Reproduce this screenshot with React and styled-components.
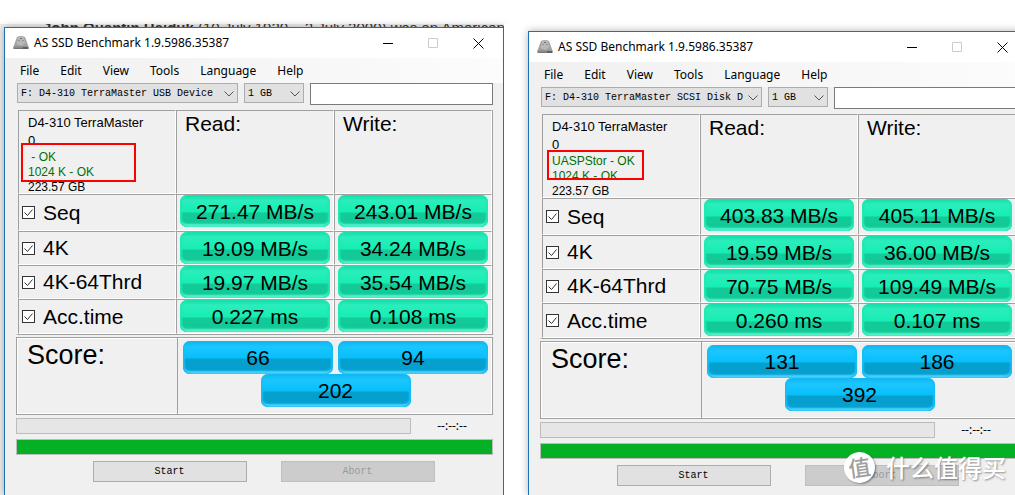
import React from 'react';
import styled, { createGlobalStyle } from 'styled-components';

const GlobalStyle = createGlobalStyle`
  * {
    box-sizing: border-box;
  }

  body {
    margin: 0;
    background: #ffffff;
    color: #000000;
    font-family: "Liberation Sans", Arial, sans-serif;
    overflow: hidden;
  }
`;

const uiFont = '"Noto Sans", "Open Sans", sans-serif';
const monoFont = '"Liberation Mono", "Courier New", monospace';

const Desktop = styled.main`
  position: relative;
  display: flex;
  height: 100vh;
  padding-top: 24px;
  overflow: hidden;
`;

const Pane = styled.section`
  position: relative;
  display: flex;
  flex: 1 0 ${props => props.$basis}px;
  padding: ${props => props.$inset};
  background: ${props => props.$backdrop};
`;

const Backdrop = styled.p`
  position: absolute;
  top: 0;
  left: 43px;
  height: 3px;
  margin: 0;
  overflow: hidden;
  color: #3c3430;
  font-size: 15px;
  line-height: 8px;
  white-space: nowrap;
`;

const AppWindow = styled.div`
  position: relative;
  flex: 1;
  border: 1px solid #1a70b4;
  border-bottom: none;
  background: #f0f0f0;
  box-shadow: 0 0 8px rgba(0, 0, 0, 0.3);
`;

const TitleBar = styled.header`
  display: flex;
  align-items: center;
  height: 30px;
  padding: 0 2px 0 8px;
  background: #ffffff;
  font-family: ${uiFont};
`;

const Title = styled.h1`
  flex: 1;
  margin: 0 0 0 5px;
  font-size: 12px;
  font-weight: 400;
  line-height: 20px;
  white-space: nowrap;
`;

const CaptionButton = styled.button`
  display: flex;
  align-items: center;
  justify-content: center;
  width: 45px;
  height: 28px;
  padding: 0;
  border: none;
  background: transparent;
  color: ${props => (props.disabled ? '#cccccc' : '#000000')};
`;

const MenuBar = styled.nav`
  display: flex;
  align-items: center;
  gap: 21px;
  height: 25px;
  padding-left: 15px;
  background: linear-gradient(90deg, #f0f0f0 0%, #fcfcfc 100%);
`;

const MenuItem = styled.button`
  padding: 0;
  border: none;
  background: transparent;
  color: #000000;
  font-family: ${uiFont};
  font-size: 12px;
  line-height: 20px;
`;

const Body = styled.div`
  padding: 0 10px 0 11px;
`;

const Toolbar = styled.div`
  display: flex;
  align-items: flex-start;
  margin-bottom: 5px;
  padding-left: 1px;
  gap: 6px;
`;

const SelectBox = styled.div`
  position: relative;
  flex: 0 0 ${props => props.$width}px;
`;

const Select = styled.select`
  display: block;
  width: 100%;
  height: 20px;
  padding: 0 18px 0 3px;
  border: 1px solid #adadad;
  border-radius: 0;
  background: #e1e1e1;
  color: #000000;
  font-family: ${monoFont};
  font-size: 10px;
  appearance: none;
`;

const Chevron = styled.svg`
  position: absolute;
  top: 8px;
  right: 4px;
  pointer-events: none;
`;

const TextBox = styled.input`
  flex: 1;
  min-width: 0;
  height: 22px;
  border: 1px solid #7a7a7a;
  background: #ffffff;
`;

const Results = styled.table`
  width: 100%;
  border-collapse: separate;
  border-spacing: 0;
  table-layout: fixed;
  border: solid;
  border-width: 0 1px 1px 2px;
  border-color: #f0f0f0 #a0a0a0 #a0a0a0 #f0f0f0;
`;

const Row = styled.tr`
  height: ${props => props.$height}px;
`;

const Cell = styled.td`
  padding: 0 3px;
  border: 1px solid;
  border-color: #a0a0a0 #ffffff #ffffff #a0a0a0;
  vertical-align: ${props => (props.$top ? 'top' : 'middle')};
`;

const Heading = styled.h2`
  margin: 0;
  padding: ${props => (props.$large ? '2px 10px' : '1px 5px')};
  font-size: ${props => (props.$large ? 27 : 21)}px;
  font-weight: 400;
  line-height: ${props => (props.$large ? 30 : 24)}px;
`;

const Info = styled.div`
  position: relative;
  height: 82px;
  padding: 3px 0 0 6px;
  font-size: 12px;
  line-height: 15px;
  white-space: pre;
`;

const Device = styled.div`
  font-size: 13px;
  line-height: 18px;
`;

const Status = styled.div`
  color: ${props => (props.$ok ? '#007000' : '#000000')};
`;

const Highlight = styled.div`
  position: absolute;
  top: ${props => props.$box.top}px;
  left: ${props => props.$box.left}px;
  width: ${props => props.$box.width}px;
  height: ${props => props.$box.height}px;
  border: 2px solid #ff0000;
`;

const TestLabel = styled.label`
  display: flex;
  align-items: center;
  gap: 8px;
  font-size: 21px;
  line-height: 24px;
`;

const CheckBox = styled.input`
  appearance: none;
  flex: none;
  width: 13px;
  height: 13px;
  margin: 0;
  border: 1px solid #333333;
  background: #ffffff
    url("data:image/svg+xml,%3Csvg xmlns='http://www.w3.org/2000/svg' width='11' height='11' fill='none' stroke='%23333'%3E%3Cpath d='M1.5 5.5l3 3 5-6'/%3E%3C/svg%3E")
    center no-repeat;
`;

const palettes = {
  green: {
    face: 'linear-gradient(180deg, #0fdda6 0, #2cedbc 5px, #16eeb3 17px, #12cb98 18px, #10c996 100%)',
    edge: '#20e8b2',
    glow: '#5cf5cd'
  },
  blue: {
    face: 'linear-gradient(180deg, #10b4ee 0, #1cc6ff 6px, #06bffa 17px, #069fce 18px, #04a0d0 100%)',
    edge: '#16bdf5',
    glow: '#4fd4ff'
  }
};

const Badge = styled.div`
  height: ${props => (props.$tone === 'green' ? 32 : 33)}px;
  border-radius: 7px;
  background: ${props => palettes[props.$tone].face};
  box-shadow:
    inset 2px 0 2px ${props => palettes[props.$tone].edge},
    inset -2px 0 2px ${props => palettes[props.$tone].edge},
    inset 0 -3px 2px ${props => palettes[props.$tone].glow};
  font-size: 21px;
  line-height: 34px;
  text-align: center;
`;

const ScorePanel = styled.section`
  display: grid;
  grid-template-columns: 160px 1fr;
  height: 78px;
  margin-top: 2px;
  border: 1px solid #a0a0a0;
  box-shadow: inset 1px 1px #ffffff, inset -1px -1px #ffffff;
`;

const Scores = styled.div`
  display: grid;
  grid-template-columns: repeat(4, 1fr);
  align-content: start;
  gap: 0 5px;
  padding: 3px 4px 0 5px;
  border-left: 1px solid #a0a0a0;
`;

const ScoreSlot = styled.div`
  grid-column: ${props => props.$column};
`;

const ProgressRow = styled.div`
  display: flex;
  align-items: center;
  margin-top: ${props => (props.$spaced ? 5 : 3)}px;
`;

const Track = styled.div`
  flex: 1;
  height: 16px;
  border: 1px solid #bcbcbc;
  background: ${props => (props.$done ? '#06b025' : '#e6e6e6')};
`;

const Elapsed = styled.time`
  width: 82px;
  font-family: ${uiFont};
  font-size: 12px;
  line-height: 16px;
  text-align: center;
`;

const Actions = styled.div`
  display: grid;
  grid-template-columns: 154px 154px;
  justify-content: center;
  gap: 34px;
  margin-top: 6px;
  padding-left: 18px;
`;

const ActionButton = styled.button`
  height: 21px;
  padding: 0;
  border: 1px solid #adadad;
  background: #e1e1e1;
  color: #000000;
  font-family: ${monoFont};
  font-size: 10px;

  &:disabled {
    border-color: #bfbfbf;
    background: #cccccc;
    color: #9a9a9a;
  }
`;

const Watermark = styled.div`
  position: absolute;
  right: 9px;
  bottom: 12px;
  display: flex;
  align-items: center;
  gap: 11px;
  color: #ffffff;
  font-family: "Noto Sans CJK SC", sans-serif;
  font-size: 24px;
  font-weight: 500;
  line-height: 32px;
  text-shadow: 1px 1px 2px rgba(0, 0, 0, 0.4);
`;

const WatermarkSeal = styled.span`
  width: 31px;
  height: 31px;
  border-radius: 50%;
  background: #ffffff;
  box-shadow: 1px 1px 2px rgba(0, 0, 0, 0.4);
  color: #a0a0a0;
  font-size: 22px;
  line-height: 29px;
  text-align: center;
  text-shadow: none;
  transform: rotate(-8deg);
`;

const menus = ['File', 'Edit', 'View', 'Tools', 'Language', 'Help'];

const runs = [
  {
    id: 'usb',
    drive: 'F: D4-310 TerraMaster USB Device',
    driver: ' - OK',
    highlight: { top: 32, left: -1, width: 115, height: 39 },
    tests: [
      { name: 'Seq', read: '271.47 MB/s', write: '243.01 MB/s' },
      { name: '4K', read: '19.09 MB/s', write: '34.24 MB/s' },
      { name: '4K-64Thrd', read: '19.97 MB/s', write: '35.54 MB/s' },
      { name: 'Acc.time', read: '0.227 ms', write: '0.108 ms' }
    ],
    score: { read: 66, write: 94, total: 202 }
  },
  {
    id: 'scsi',
    drive: 'F: D4-310 TerraMaster SCSI Disk D',
    driver: 'UASPStor - OK',
    highlight: { top: 35, left: 1, width: 97, height: 30 },
    tests: [
      { name: 'Seq', read: '403.83 MB/s', write: '405.11 MB/s' },
      { name: '4K', read: '19.59 MB/s', write: '36.00 MB/s' },
      { name: '4K-64Thrd', read: '70.75 MB/s', write: '109.49 MB/s' },
      { name: 'Acc.time', read: '0.260 ms', write: '0.107 ms' }
    ],
    score: { read: 131, write: 186, total: 392 }
  }
];

const rowHeights = [37, 34, 34, 35];

const DriveIcon = () => (
  <svg width="16" height="14" viewBox="0 0 16 14" aria-hidden="true">
    <path d="M4 1Q8 -1 12 1L15.5 10.5H.5z" fill="#a2a2a2" />
    <path d="M5 1Q8 0 11 1l1.5 6-4 3-5-2z" fill="#b8b8b8" />
    <path d="M.5 10.5h15V13H.5z" fill="#606060" />
    <path d="M1 10.5h9v2H1z" fill="#8a8a8a" />
    <path d="M7 2.5h2M5.5 4.5h1M9.5 4.5h1" stroke="#707070" />
  </svg>
);

const Dropdown = ({ label, value, width }) => (
  <SelectBox $width={width}>
    <Select aria-label={label} defaultValue={value}>
      <option>{value}</option>
    </Select>
    <Chevron width="10" height="6" fill="none" stroke="#555555">
      <path d="M.5 .5l4.5 4.5 4.5-4.5" />
    </Chevron>
  </SelectBox>
);

const BenchmarkWindow = ({ run }) => (
  <AppWindow>
    <TitleBar>
      <DriveIcon />
      <Title>AS SSD Benchmark 1.9.5986.35387</Title>
      <CaptionButton aria-label="Minimize">
        <svg width="11" height="11" stroke="currentColor"><path d="M0 5.5h10" /></svg>
      </CaptionButton>
      <CaptionButton aria-label="Maximize" disabled>
        <svg width="11" height="11" fill="none" stroke="currentColor"><path d="M.5 .5h9v9h-9z" /></svg>
      </CaptionButton>
      <CaptionButton aria-label="Close">
        <svg width="11" height="11" stroke="currentColor"><path d="M.5 .5l10 10M10.5 .5l-10 10" /></svg>
      </CaptionButton>
    </TitleBar>
    <MenuBar>
      {menus.map(menu => <MenuItem key={menu}>{menu}</MenuItem>)}
    </MenuBar>
    <Body>
      <Toolbar>
        <Dropdown label="Drive" value={run.drive} width={221} />
        <Dropdown label="Test size" value="1 GB" width={60} />
        <TextBox aria-label="Notes" />
      </Toolbar>
      <Results>
        <tbody>
          <Row $height={84}>
            <Cell $top>
              <Info>
                <Device>D4-310 TerraMaster</Device>
                <Device>0</Device>
                <Status $ok>{run.driver}</Status>
                <Status $ok>1024 K - OK</Status>
                <Status>223.57 GB</Status>
                <Highlight $box={run.highlight} />
              </Info>
            </Cell>
            <Cell $top><Heading>Read:</Heading></Cell>
            <Cell $top><Heading>Write:</Heading></Cell>
          </Row>
          {run.tests.map((test, index) => (
            <Row key={test.name} $height={rowHeights[index]}>
              <Cell>
                <TestLabel>
                  <CheckBox type="checkbox" defaultChecked />
                  {test.name}
                </TestLabel>
              </Cell>
              <Cell $top><Badge $tone="green">{test.read}</Badge></Cell>
              <Cell $top><Badge $tone="green">{test.write}</Badge></Cell>
            </Row>
          ))}
        </tbody>
      </Results>
      <ScorePanel>
        <Heading $large>Score:</Heading>
        <Scores>
          <ScoreSlot $column="1 / 3"><Badge $tone="blue">{run.score.read}</Badge></ScoreSlot>
          <ScoreSlot $column="3 / 5"><Badge $tone="blue">{run.score.write}</Badge></ScoreSlot>
          <ScoreSlot $column="2 / 4"><Badge $tone="blue">{run.score.total}</Badge></ScoreSlot>
        </Scores>
      </ScorePanel>
      <ProgressRow>
        <Track />
        <Elapsed>--:--:--</Elapsed>
      </ProgressRow>
      <ProgressRow $spaced>
        <Track $done />
      </ProgressRow>
      <Actions>
        <ActionButton>Start</ActionButton>
        <ActionButton disabled>Abort</ActionButton>
      </Actions>
    </Body>
  </AppWindow>
);

const App = () => (
  <>
    <GlobalStyle />
    <Desktop>
      <Pane $basis={504} $inset="3px 0 0 4px" $backdrop="#eeeeee">
        <Backdrop><b>John Quentin Hajduk</b> (10 July 1920 – 2 July 2000) was an American</Backdrop>
        <BenchmarkWindow run={runs[0]} />
      </Pane>
      <Pane $basis={524} $inset="7px 0 0 24px" $backdrop="#ffffff">
        <BenchmarkWindow run={runs[1]} />
      </Pane>
      <Watermark>
        <WatermarkSeal>值</WatermarkSeal>
        什么值得买
      </Watermark>
    </Desktop>
  </>
);

export default App;
